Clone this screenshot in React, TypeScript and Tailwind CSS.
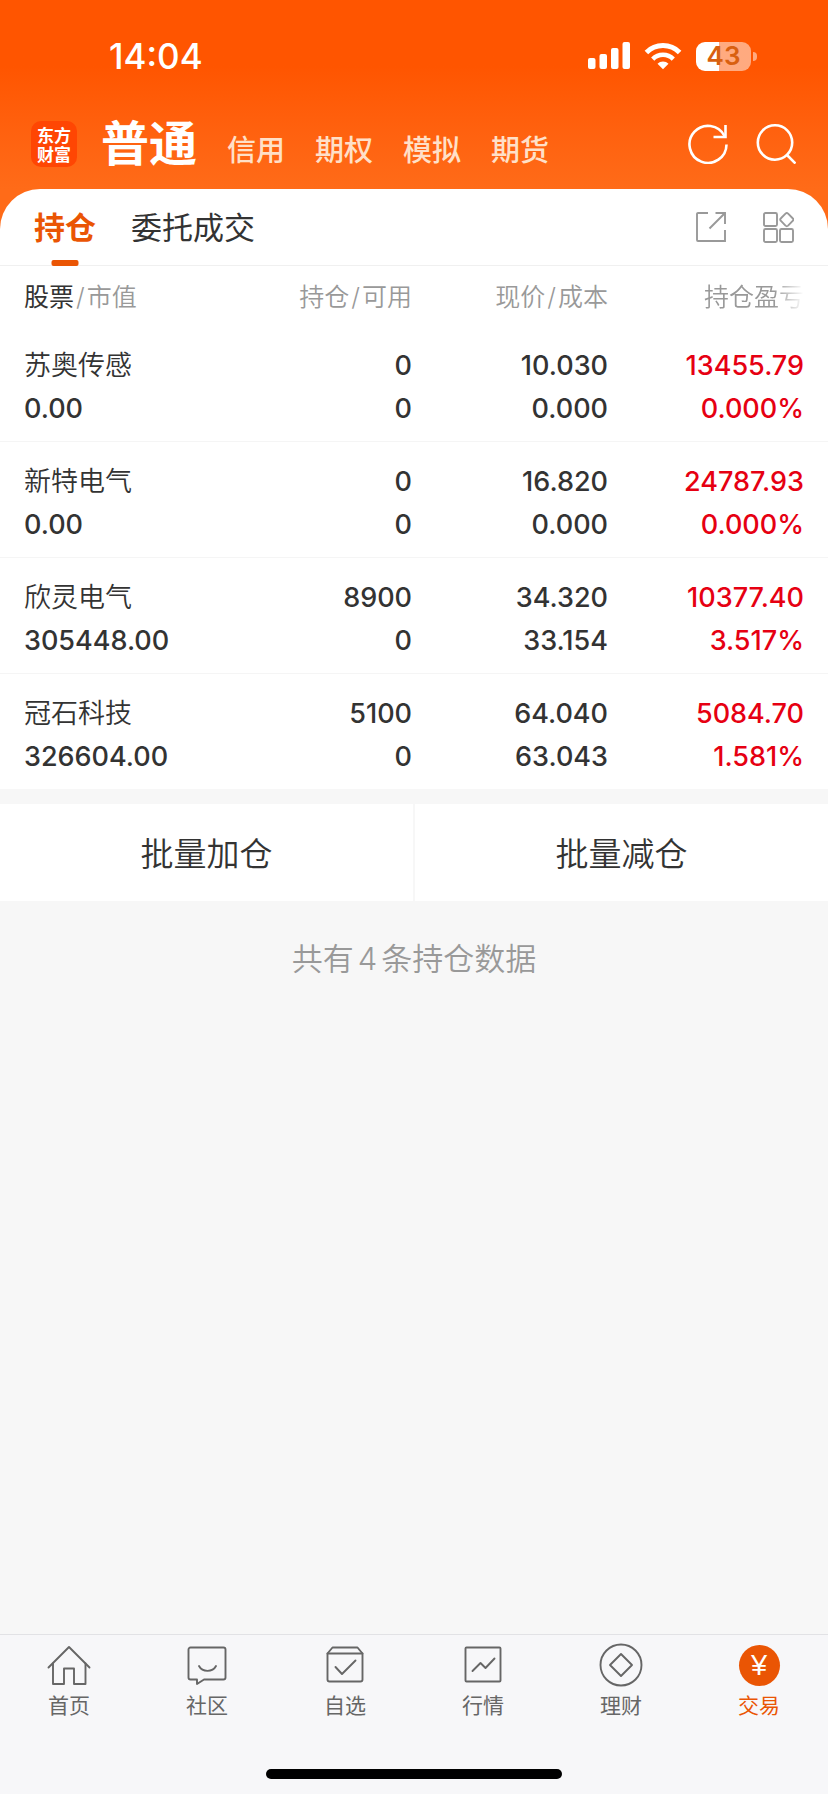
import { useState } from 'react'
import type { ReactNode } from 'react'

interface Holding {
  name: string
  marketValue: string
  amount: string
  available: string
  price: string
  cost: string
  profit: string
  profitRate: string
}

const accountTypes = ['普通', '信用', '期权', '模拟', '期货']

const holdings: Holding[] = [
  { name: '苏奥传感', marketValue: '0.00', amount: '0', available: '0', price: '10.030', cost: '0.000', profit: '13455.79', profitRate: '0.000%' },
  { name: '新特电气', marketValue: '0.00', amount: '0', available: '0', price: '16.820', cost: '0.000', profit: '24787.93', profitRate: '0.000%' },
  { name: '欣灵电气', marketValue: '305448.00', amount: '8900', available: '0', price: '34.320', cost: '33.154', profit: '10377.40', profitRate: '3.517%' },
  { name: '冠石科技', marketValue: '326604.00', amount: '5100', available: '0', price: '64.040', cost: '63.043', profit: '5084.70', profitRate: '1.581%' },
]

function NavIcon({ children }: { children: ReactNode }) {
  return (
    <svg
      className="h-11 w-11"
      viewBox="0 0 44 44"
      fill="none"
      stroke="currentColor"
      strokeWidth="1.9"
      strokeLinecap="round"
      strokeLinejoin="round"
      aria-hidden="true"
    >
      {children}
    </svg>
  )
}

const navItems = [
  {
    label: '首页',
    icon: (
      <NavIcon>
        <path d="M1.5 24.5 22 4l20.5 20.5" />
        <path d="M6 20.5V41h11V25.5h10V41h11.5V20.5" />
      </NavIcon>
    ),
  },
  {
    label: '社区',
    icon: (
      <NavIcon>
        <path d="M5.5 4.5h33a2 2 0 0 1 2 2v28a2 2 0 0 1-2 2H19L12 41v-4.5H5.5a2 2 0 0 1-2-2v-28a2 2 0 0 1 2-2Z" />
        <path d="M14 23c3.5 6.5 13.5 6.5 17 0" />
      </NavIcon>
    ),
  },
  {
    label: '自选',
    icon: (
      <NavIcon>
        <path d="M4.5 10.5h35v26a2 2 0 0 1-2 2h-31a2 2 0 0 1-2-2v-26Z" />
        <path d="m4.5 10.5 5-6h25l5 6" />
        <path d="m12.5 24 6.5 7 13.5-13.5" />
      </NavIcon>
    ),
  },
  {
    label: '行情',
    icon: (
      <NavIcon>
        <rect x="4.5" y="4.5" width="35" height="34" rx="1" />
        <path d="m11.5 28 8-8 5 5 9-9.5" />
      </NavIcon>
    ),
  },
  {
    label: '理财',
    icon: (
      <NavIcon>
        <circle cx="22" cy="22" r="20.5" />
        <path d="m22 11 11 11-11 11-11-11Z" />
      </NavIcon>
    ),
  },
  {
    label: '交易',
    icon: (
      <span className="flex h-11 items-center">
        <span className="flex h-[41px] w-[41px] items-center justify-center rounded-full bg-[#ea5504] font-['Liberation_Sans',sans-serif] text-[29px] leading-none text-white">
          ¥
        </span>
      </span>
    ),
  },
]

function StatusBar() {
  return (
    <div className="flex h-28 items-center justify-between pr-[71px] pl-[109px] text-white">
      <span className="text-[35px] leading-10 font-medium">14:04</span>
      <div className="flex items-center gap-[14px]">
        <svg className="h-7 w-[42px]" viewBox="0 0 42 28" fill="currentColor" aria-hidden="true">
          <rect x="0" y="16" width="7.5" height="11" rx="2" />
          <rect x="11.5" y="12" width="7.5" height="15" rx="2" />
          <rect x="23" y="6" width="7.5" height="21" rx="2" />
          <rect x="34.5" y="0" width="7.5" height="27" rx="2" />
        </svg>
        <svg className="h-7 w-[38px]" viewBox="0 0 38 28" fill="none" stroke="currentColor" aria-hidden="true">
          <path d="M2.4 10.4a23.5 23.5 0 0 1 33.2 0" strokeWidth="5" />
          <path d="M8.7 17.1a14.5 14.5 0 0 1 20.6 0" strokeWidth="4.5" />
          <path d="M13.5 21.7a7.8 7.8 0 0 1 11 0L19 27.2Z" fill="currentColor" stroke="none" />
        </svg>
        <div className="flex items-center gap-[2px]">
          <span className="flex h-[29px] w-[55px] items-center justify-center rounded-[9px] bg-linear-to-r from-white from-42% to-white/50 to-42% text-[26px] leading-none font-semibold text-[#d9600f]">
            43
          </span>
          <span className="h-[9px] w-1 rounded-r-full bg-white/50" />
        </div>
      </div>
    </div>
  )
}

function Slash() {
  return <span className="mx-[2px]">/</span>
}

export default function App() {
  const [account, setAccount] = useState('普通')
  const [tab, setTab] = useState('持仓')
  const [page, setPage] = useState('交易')

  return (
    <div className="flex min-h-screen flex-col bg-[#f7f7f7] font-['Inter','Noto_Sans_CJK_SC',sans-serif] text-[#333]">
      <header className="bg-linear-to-b from-[#ff5500] from-35% to-[#ff6b18]">
        <StatusBar />
        <div className="flex h-[77px] items-center pr-8 pb-[13px] pl-[31px]">
          <div className="flex h-[46px] w-[46px] items-center justify-center rounded-[10px] bg-[#ff4603]">
            <span className="w-[34px] font-['Noto_Sans_CJK_SC',sans-serif] text-[17px] leading-[19px] font-bold break-all text-white">
              东方财富
            </span>
          </div>
          <nav className="ml-6 flex items-baseline gap-[30px]">
            {accountTypes.map((type) => (
              <button
                key={type}
                type="button"
                onClick={() => setAccount(type)}
                className={type === account ? 'text-[48px] leading-[56px] font-bold text-white' : 'text-[29px] leading-[40px] font-medium text-[#ffe0c8]'}
              >
                {type}
              </button>
            ))}
          </nav>
          <div className="ml-auto flex items-center gap-7 text-white">
            <button type="button" aria-label="刷新">
              <svg className="h-10 w-10" viewBox="0 0 40 40" fill="none" stroke="currentColor" strokeWidth="2.6">
                <path d="M38.5 20.5A18.5 18.5 0 1 1 36.5 12" />
                <path d="M37.5 1v12h-12" />
              </svg>
            </button>
            <button type="button" aria-label="搜索">
              <svg className="h-10 w-10" viewBox="0 0 40 40" fill="none" stroke="currentColor" strokeWidth="2.6">
                <circle cx="19" cy="18.5" r="17.2" />
                <path d="m31 31 8.5 8.5" />
              </svg>
            </button>
          </div>
        </div>
      </header>

      <main>
        <div className="bg-[#ff6b18]">
          <div className="flex h-[77px] items-stretch rounded-t-[40px] border-b border-[#f0f0f0] bg-white px-[34px]">
            {['持仓', '委托成交'].map((item) => (
              <button
                key={item}
                type="button"
                onClick={() => setTab(item)}
                className={`relative mr-[35px] pt-[2px] text-[31px] ${item === tab ? 'font-bold text-[#ea5504]' : ''}`}
              >
                {item}
                {item === tab && (
                  <span className="absolute -bottom-px left-1/2 h-[6px] w-[27px] -translate-x-1/2 rounded-[2px] bg-[#ea5504]" />
                )}
              </button>
            ))}
            <div className="ml-auto flex items-center gap-[37px] text-[#999]">
              <button type="button" aria-label="分享">
                <svg className="h-[30px] w-[30px]" viewBox="0 0 30 30" fill="none" stroke="currentColor" strokeWidth="1.9">
                  <path d="M12 1H2a1 1 0 0 0-1 1v26a1 1 0 0 0 1 1h27V18" />
                  <path d="M19.5 1H29v11" />
                  <path d="M29 1 13.5 16.5" />
                </svg>
              </button>
              <button type="button" aria-label="更多功能">
                <svg className="h-[31px] w-[31px]" viewBox="0 0 31 31" fill="none" stroke="currentColor" strokeWidth="1.9" strokeLinejoin="round">
                  <rect x="1" y="1" width="13" height="13" rx="1.5" />
                  <rect x="1" y="17" width="13" height="13" rx="1.5" />
                  <rect x="17" y="17" width="13" height="13" rx="1.5" />
                  <path d="M22.5 1.6a2 2 0 0 1 2.6 0l4.8 4.9a1.5 1.5 0 0 1 0 2.2l-4.8 4.9a2 2 0 0 1-2.6 0l-4.8-4.9a1.5 1.5 0 0 1 0-2.2Z" />
                </svg>
              </button>
            </div>
          </div>
        </div>

        <table className="w-full table-fixed bg-white text-right text-[27px] leading-[43px] font-medium">
          <thead>
            <tr className="h-[60px] text-[25px] text-[#999]">
              <th className="pt-[2px] pl-6 text-left font-[350]">
                <span className="font-normal text-[#333]">股票</span>
                <Slash />
                市值
              </th>
              <th className="w-[196px] pt-[2px] font-[350]">
                持仓
                <Slash />
                可用
              </th>
              <th className="w-[196px] pt-[2px] font-[350]">
                现价
                <Slash />
                成本
              </th>
              <th className="w-[220px] pt-[2px] pr-6 font-[350]">
                <span className="mask-r-from-70% mask-r-to-100%">持仓盈亏</span>
              </th>
            </tr>
          </thead>
          <tbody>
            {holdings.map((row) => (
              <tr key={row.name} className="border-b border-[#f5f5f5] last:border-b-0">
                <td className="pt-[18px] pb-[11px] pl-6 text-left">
                  <div className="font-[350]">{row.name}</div>
                  <div>{row.marketValue}</div>
                </td>
                <td className="pt-[18px] pb-[11px]">
                  <div>{row.amount}</div>
                  <div>{row.available}</div>
                </td>
                <td className="pt-[18px] pb-[11px]">
                  <div>{row.price}</div>
                  <div>{row.cost}</div>
                </td>
                <td className="pt-[18px] pr-6 pb-[11px] text-[#e60012]">
                  <div>{row.profit}</div>
                  <div>{row.profitRate}</div>
                </td>
              </tr>
            ))}
          </tbody>
        </table>

        <div className="mt-[15px] flex divide-x-2 divide-[#f7f7f7] bg-white text-[33px] font-[350]">
          <button type="button" className="h-[97px] flex-1 pt-1">批量加仓</button>
          <button type="button" className="h-[97px] flex-1 pt-1">批量减仓</button>
        </div>

        <p className="py-9 text-center text-[31px] leading-[44px] font-[350] text-[#999]">
          共有<span className="mx-1">{holdings.length}</span>条持仓数据
        </p>
      </main>

      <footer className="mt-auto border-t border-[#e2e2e5] bg-[#f7f7f9]">
        <nav className="grid grid-cols-6 pt-2">
          {navItems.map((item) => (
            <button
              key={item.label}
              type="button"
              onClick={() => setPage(item.label)}
              className={`flex flex-col items-center gap-1 text-[21px] leading-[30px] ${item.label === page ? 'text-[#ea5504]' : 'text-[#666]'}`}
            >
              {item.icon}
              {item.label}
            </button>
          ))}
        </nav>
        <div className="mx-auto mt-12 mb-[15px] h-[10px] w-[296px] rounded-full bg-black" />
      </footer>
    </div>
  )
}
